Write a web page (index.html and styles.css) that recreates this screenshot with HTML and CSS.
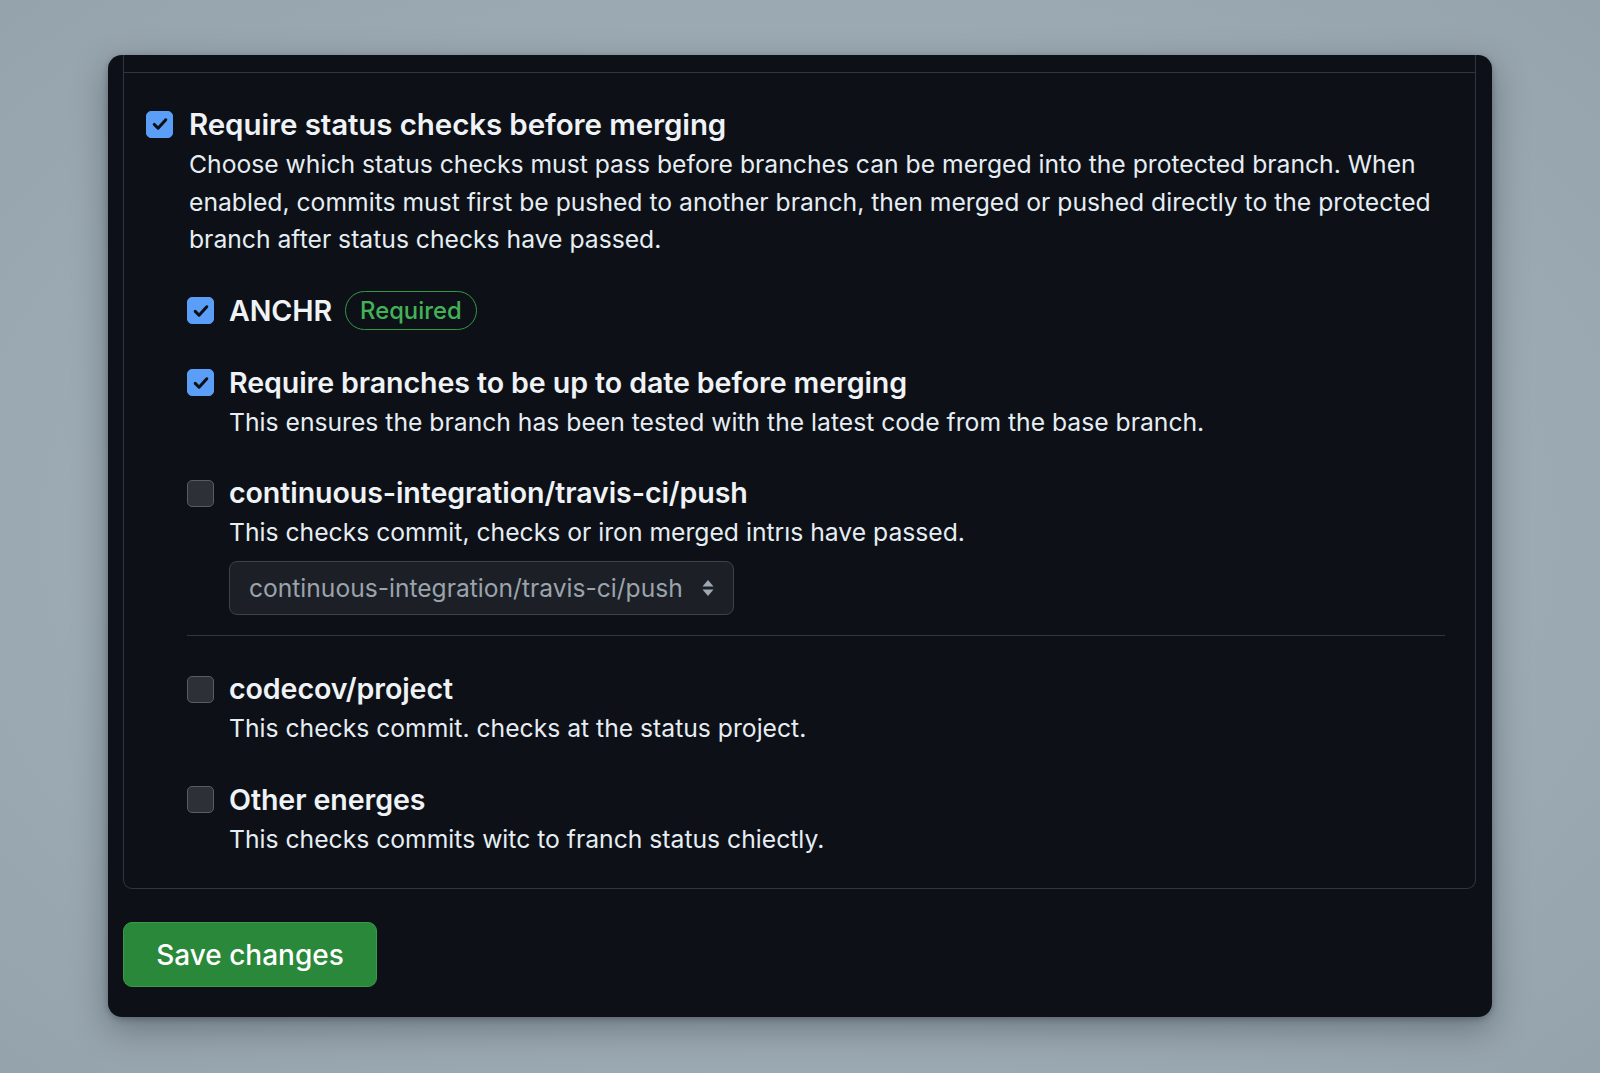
FILE: index.html
```html
<!DOCTYPE html>
<html lang="en">
<head>
<meta charset="utf-8">
<title>Branch protection</title>
<link rel="stylesheet" href="styles.css">
</head>
<body>
<div class="panel">
  <div class="box">
    <div class="box-cap"></div>
    <div class="box-body">
      <div class="option">
        <span class="cb cb-on"><svg viewBox="0 0 16 16"><path d="M3.8 8.3l2.8 2.8 5.6-6.2"/></svg></span>
        <div class="option-text">
          <div class="title title-main">Require status checks before merging</div>
          <p class="desc">Choose which status checks must pass before branches can be merged into the protected branch. When enabled, commits must first be pushed to another branch, then merged or pushed directly to the protected branch after status checks have passed.</p>
        </div>
      </div>

      <div class="checks">
        <div class="option sub">
          <span class="cb cb-on"><svg viewBox="0 0 16 16"><path d="M3.8 8.3l2.8 2.8 5.6-6.2"/></svg></span>
          <div class="option-text row">
            <span class="title">ANCHR</span>
            <span class="badge">Required</span>
          </div>
        </div>

        <div class="option sub">
          <span class="cb cb-on"><svg viewBox="0 0 16 16"><path d="M3.8 8.3l2.8 2.8 5.6-6.2"/></svg></span>
          <div class="option-text">
            <div class="title">Require branches to be up to date before merging</div>
            <p class="desc desc-sub">This ensures the branch has been tested with the latest code from the base branch.</p>
          </div>
        </div>

        <div class="option sub">
          <span class="cb"></span>
          <div class="option-text">
            <div class="title">continuous-integration/travis-ci/push</div>
            <p class="desc desc-sub">This checks commit, checks or iron merged intrıs have passed.</p>
            <div class="select">
              <span>continuous-integration/travis-ci/push</span>
              <svg class="caret" viewBox="0 0 14 20"><path d="M7 2L12.5 8.5H1.5z"/><path d="M7 18L12.5 11.5H1.5z"/></svg>
            </div>
          </div>
        </div>

        <hr class="sep">

        <div class="option sub">
          <span class="cb"></span>
          <div class="option-text">
            <div class="title">codecov/project</div>
            <p class="desc desc-sub">This checks commit. checks at the status project.</p>
          </div>
        </div>

        <div class="option sub">
          <span class="cb"></span>
          <div class="option-text">
            <div class="title">Other energes</div>
            <p class="desc desc-sub">This checks commits witc to franch status chiectly.</p>
          </div>
        </div>
      </div>
    </div>
  </div>
  <button class="save" type="button">Save changes</button>
</div>
</body>
</html>
```

FILE: styles.css
```css
* { box-sizing: border-box; }

html, body { height: 100%; }

body {
  margin: 0;
  padding: 55px 0 0 108px;
  background: radial-gradient(ellipse at 50% 50%, #a5b3bc 0%, #9dabb4 60%, #95a3ac 100%);
  font-family: Inter, "Noto Sans", "Liberation Sans", sans-serif;
  color: #e6edf3;
  overflow: hidden;
}

.panel {
  width: 1384px;
  background: #0d1117;
  border-radius: 14px;
  padding: 0 16px 30px 15px;
  box-shadow: 0 12px 34px rgba(20, 30, 40, 0.35), 0 2px 6px rgba(0, 0, 0, 0.25);
  overflow: hidden;
}

.box {
  border: 1.5px solid #30363d;
  border-top: none;
  border-radius: 0 0 9px 9px;
}

.box-cap {
  height: 18px;
  border-bottom: 1.5px solid #30363d;
}

.box-body {
  padding: 31px 30px 30px 22px;
}

.option {
  display: flex;
  align-items: flex-start;
  gap: 16px;
}

.option.sub { gap: 15px; }

.cb {
  flex: none;
  width: 27px;
  height: 27px;
  margin-top: 6.5px;
  border-radius: 5px;
  background: #2d3137;
  border: 1.5px solid #575d65;
  display: flex;
  align-items: center;
  justify-content: center;
}

.cb-on {
  background: #5b9ef7;
  border-color: #5b9ef7;
}

.cb svg {
  width: 22px;
  height: 22px;
  fill: none;
  stroke: #0d1117;
  stroke-width: 2.2;
  stroke-linecap: round;
  stroke-linejoin: round;
}

.option-text { flex: 1; min-width: 0; }

.option-text.row {
  display: flex;
  align-items: center;
  gap: 13px;
  height: 40px;
}

.title {
  font-size: 28.6px;
  line-height: 40px;
  font-weight: 600;
  color: #f0f3f6;
  letter-spacing: -0.1px;
}

.title-main {
  font-size: 29.5px;
}

.desc {
  margin: 2px 0 0;
  font-size: 24.7px;
  line-height: 37.5px;
  color: #e6edf3;
}

.desc-sub {
  margin-top: 1px;
}

.checks {
  margin-top: 32px;
  padding-left: 41px;
  display: flex;
  flex-direction: column;
  gap: 32px;
}

.badge {
  display: inline-flex;
  align-items: center;
  height: 39px;
  padding: 0 14px;
  border: 1.5px solid #2f9a45;
  border-radius: 20px;
  color: #43b257;
  font-size: 23.8px;
  font-weight: 500;
}

.select {
  margin-top: 9px;
  width: 505px;
  height: 54px;
  padding: 0 18px 0 19px;
  display: flex;
  align-items: center;
  justify-content: space-between;
  background: #1c2026;
  border: 1.5px solid #3c424a;
  border-radius: 8px;
  color: #9ba3ac;
  font-size: 24.6px;
}

.caret {
  width: 14px;
  height: 20px;
  fill: #a0a8b1;
}

.sep {
  margin: -12px 0 1px;
  border: none;
  height: 1.5px;
  background: #30363d;
}

.save {
  margin-top: 33px;
  width: 254px;
  height: 65px;
  border-radius: 9px;
  background: #29883a;
  border: 1px solid #3a9a4a;
  color: #ffffff;
  font-family: Inter, "Noto Sans", "Liberation Sans", sans-serif;
  font-size: 28px;
  font-weight: 500;
  cursor: pointer;
}
```
